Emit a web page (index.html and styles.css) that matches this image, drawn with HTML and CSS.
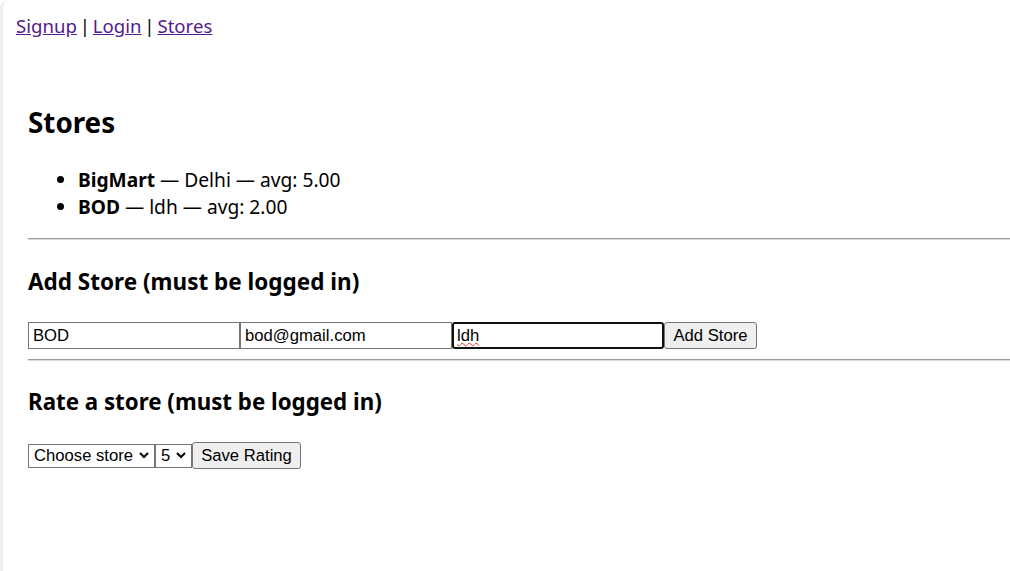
FILE: index.html
```html
<!DOCTYPE html>
<html lang="en">
<head>
<meta charset="utf-8">
<title>Stores</title>
<link rel="stylesheet" href="styles.css">
</head>
<body>
<div class="frame">
  <nav class="nav"><a class="nav-link" href="#signup">Signup</a> | <a class="nav-link" href="#login">Login</a> | <a class="nav-link" href="#stores">Stores</a></nav>
  <main class="main">
    <h2 class="title">Stores</h2>
    <ul class="store-list">
      <li><strong>BigMart</strong> — Delhi — avg: 5.00</li>
      <li><strong>BOD</strong> — ldh — avg: 2.00</li>
    </ul>
    <hr class="rule rule-top">
    <h3 class="section-title section-add">Add Store (must be logged in)</h3>
    <form class="row add-form">
      <input class="field" type="text" value="BOD">
      <input class="field" type="text" value="bod@gmail.com">
      <span class="focus-wrap"><input class="field field-focus" type="text" value="ldh"><span class="spell">ldh</span></span>
      <button class="btn btn-add" type="button">Add Store</button>
    </form>
    <hr class="rule rule-mid">
    <h3 class="section-title section-rate">Rate a store (must be logged in)</h3>
    <form class="row rate-form">
      <select class="select select-store"><option>Choose store</option></select>
      <select class="select select-num"><option>5</option></select>
      <button class="btn btn-save" type="button">Save Rating</button>
    </form>
  </main>
</div>
</body>
</html>
```

FILE: styles.css
```css
html, body {
  margin: 0;
  padding: 0;
  background: #ffffff;
}

.frame {
  min-height: 571px;
  box-sizing: border-box;
  border-left: 3px solid #efefef;
  border-top-left-radius: 8px;
  font-family: "Noto Sans", "Open Sans", sans-serif;
  color: #000;
}

.nav {
  padding: 12px 0 0 13px;
  font-size: 18.6px;
  line-height: 27px;
  word-spacing: -2px;
}

.nav-link {
  color: #551a8b;
  text-decoration: underline;
  word-spacing: 0;
}

.main {
  padding-left: 25px;
}

.title {
  margin: 63px 0 0 0;
  font-size: 27.8px;
  line-height: 40px;
  font-weight: 700;
}

.store-list {
  margin: 25px 0 0 0;
  padding-left: 50px;
  font-size: 19.2px;
  line-height: 26.67px;
}

.store-list strong {
  font-weight: 700;
}

.rule {
  border: 0;
  height: 0;
  border-top: 1px solid #9a9a9a;
  border-bottom: 1px solid #dcdcdc;
  margin: 0;
}

.rule-top {
  margin-top: 18px;
}

.rule-mid {
  margin-top: 10px;
}

.section-title {
  margin: 0;
  font-size: 22.5px;
  line-height: 31px;
  font-weight: 700;
}

.section-add {
  margin-top: 26px;
}

.section-rate {
  margin-top: 25px;
  font-size: 22.3px;
}

.row {
  display: flex;
  align-items: center;
  margin: 0;
}

.add-form {
  margin-top: 25px;
}

.rate-form {
  margin-top: 25px;
}

.field {
  box-sizing: border-box;
  width: 212px;
  height: 27px;
  margin: 0;
  padding: 0 4px;
  border: 1px solid #767676;
  border-radius: 0;
  font-family: "Liberation Sans", Arial, sans-serif;
  font-size: 16.67px;
  color: #000;
  background: #fff;
  outline: none;
}

.focus-wrap {
  position: relative;
  display: inline-block;
  width: 212px;
  height: 27px;
}

.field-focus {
  border: 2px solid #101010;
  border-radius: 3px;
  padding: 0 3px;
}

.spell {
  position: absolute;
  left: 5px;
  top: 3px;
  font-family: "Liberation Sans", Arial, sans-serif;
  font-size: 16.67px;
  line-height: 20px;
  color: transparent;
  text-decoration: underline wavy #e0322a;
  text-decoration-thickness: 1px;
  text-underline-offset: 2px;
  pointer-events: none;
}

.btn {
  box-sizing: border-box;
  height: 27px;
  margin: 0;
  padding: 0;
  border: 1px solid #767676;
  border-radius: 3px;
  background: #efefef;
  font-family: "Liberation Sans", Arial, sans-serif;
  font-size: 16.67px;
  color: #000;
  text-align: center;
}

.btn-add {
  width: 93px;
}

.btn-save {
  width: 109px;
}

.select {
  box-sizing: border-box;
  height: 24px;
  margin: 0;
  padding: 0 0 0 5px;
  border: 1px solid #767676;
  border-radius: 0;
  background-color: #fff;
  background-image: url("data:image/svg+xml,%3Csvg xmlns='http://www.w3.org/2000/svg' width='10' height='7' viewBox='0 0 10 7'%3E%3Cpolyline points='1,1 5,5 9,1' fill='none' stroke='%23000' stroke-width='2'/%3E%3C/svg%3E");
  background-repeat: no-repeat;
  background-position: right 5px center;
  -webkit-appearance: none;
  appearance: none;
  font-family: "Liberation Sans", Arial, sans-serif;
  font-size: 16.67px;
  color: #000;
}

.select-store {
  width: 127px;
}

.select-num {
  width: 37px;
}
```
